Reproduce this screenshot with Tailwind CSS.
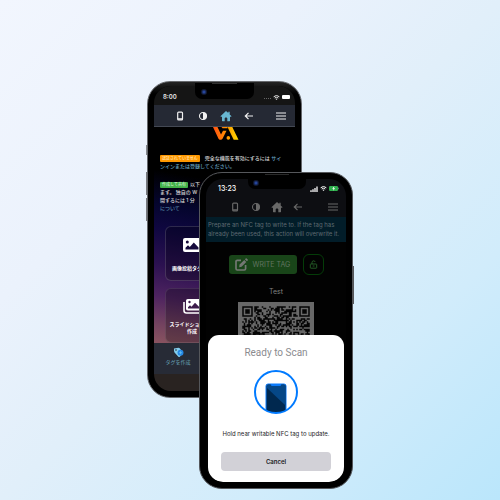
<!DOCTYPE html>
<html lang="ja">
<head>
<meta charset="utf-8">
<meta name="viewport" content="width=device-width, initial-scale=1">
<title>NFC Tag Writer</title>
<script src="https://cdn.jsdelivr.net/npm/@tailwindcss/browser@4"></script>
</head>
<body class="font-['Inter','Noto_Sans_CJK_JP',sans-serif]">
<svg class="hidden" aria-hidden="true">
  <symbol id="i-phone" viewBox="0 0 10 10"><rect x="2.700" y="1.100" width="4.800" height="7.800" rx=".9" fill="none" stroke="currentColor" stroke-width="1.200"/><path d="M2.700 7.200h4.800v1.400H2.700z" fill="currentColor"/></symbol>
  <symbol id="i-contrast" viewBox="0 0 10 10"><circle cx="5" cy="5" r="3.500" fill="none" stroke="currentColor" stroke-width="1.100"/><path d="M5 1.500a3.500 3.500 0 0 1 0 7z" fill="currentColor"/></symbol>
  <symbol id="i-home" viewBox="0 0 12 12"><path d="M6 .9.7 5.900c-.3.4 0 .8.4.8h.9v4c0 .3.200.5.500.5h2.200V8.400c0-.6.500-1 1.300-1s1.300.4 1.300 1v2.800h2.200c.3 0 .5-.2.500-.5v-4h.9c.4 0 .7-.4.400-.8L9.700 4.400V1.800H8.300v1.300z" fill="currentColor"/></symbol>
  <symbol id="i-back" viewBox="0 0 10 10"><path d="M9 5H1.300M4.500 1.800 1.300 5l3.200 3.200" fill="none" stroke="currentColor" stroke-width="1.200"/></symbol>
  <symbol id="i-menu" viewBox="0 0 10 10"><path d="M0 2h10M0 5h10M0 8h10" stroke="currentColor" stroke-width="1"/></symbol>
  <symbol id="i-wifi" viewBox="0 0 8 6"><path d="M.6 2.100a5 5 0 0 1 6.800 0M1.900 3.600a3.200 3.200 0 0 1 4.200 0" fill="none" stroke="currentColor" stroke-width="1.200"/><path d="M4 5.900 2.900 4.700a1.600 1.600 0 0 1 2.200 0z" fill="currentColor"/></symbol>
</svg>

<main class="relative min-h-screen overflow-hidden bg-[linear-gradient(135deg,#f2f6fe_0%,#ebf2fc_30%,#e1effa_50%,#d1ecfb_75%,#bae6fb_100%)]">

  <!-- Tag creation screen -->
  <section class="absolute left-[147px] top-[81px]" aria-label="タグを作成">
    <span class="absolute -left-px top-[64px] h-[10px] w-[2px] bg-[#85888d]"></span>
    <span class="absolute -left-px top-[91px] h-[23px] w-[2px] bg-[#77797e]"></span>
    <span class="absolute -left-px top-[117px] h-[23px] w-[2px] bg-[#77797e]"></span>
    <div class="relative w-[155px] rounded-[23px] border border-[#66686c] bg-[linear-gradient(#242424,#000_12px)] px-[6px] pt-[4px] pb-[6px]">
      <span class="absolute left-[47px] top-[1px] z-10 flex h-[16px] w-[59px] rounded-b-[7px] bg-black">
        <span class="absolute left-[17px] top-0 h-px w-[25px] bg-[#303030]"></span>
        <span class="absolute left-[6px] top-[6px] size-[6px] rounded-full bg-[radial-gradient(#2747a0_15%,#10182f_60%)]"></span>
      </span>
      <div class="overflow-hidden rounded-[17px] bg-black">
        <div class="flex h-[19px] items-center justify-between bg-[#151515] pl-[9px] pr-[5px] pt-[3px] text-[#e8e8e8]">
          <time class="text-[6px] leading-[8px] font-semibold">8:00</time>
          <div class="flex items-center gap-[2px]">
            <span class="w-[7px] border-b border-dotted border-[#666] pt-[3px]"></span>
            <svg class="h-[5px] w-[7px]"><use href="#i-wifi"/></svg>
            <span class="h-[4px] w-[8px] rounded-[1px] bg-white"></span>
          </div>
        </div>
        <nav class="flex h-[22px] items-center border-b border-[#444954] bg-[#252934] pl-[21px] pr-[9px] text-[#f1f1f1]">
          <div class="flex items-center gap-[13px]">
            <button aria-label="デバイス"><svg class="block size-[10px]"><use href="#i-phone"/></svg></button>
            <button aria-label="テーマ"><svg class="block size-[10px]"><use href="#i-contrast"/></svg></button>
            <a href="#" aria-label="ホーム" class="-mx-px text-[#69b7d2]"><svg class="block size-[12px]"><use href="#i-home"/></svg></a>
            <button aria-label="戻る"><svg class="block size-[10px]"><use href="#i-back"/></svg></button>
          </div>
          <button aria-label="メニュー" class="ml-auto"><svg class="block size-[10px]"><use href="#i-menu"/></svg></button>
        </nav>
        <div class="h-[216px] overflow-hidden bg-[linear-gradient(190deg,#000_0%,#000_28%,#05052e_42%,#0f0740_52%,#2b1150_67%,#4d2360_80%,#74435f_92%,#8a5460_100%)]">
          <svg class="ml-[59px] block h-[13px] w-[26px]" viewBox="0 0 26 13" role="img" aria-label="VA">
            <defs><linearGradient id="mark" x1="0" x2="26" y1="0" y2="0" gradientUnits="userSpaceOnUse"><stop stop-color="#ff4e13"/><stop offset=".5" stop-color="#ff9200"/><stop offset="1" stop-color="#ffe000"/></linearGradient></defs>
            <g fill="url(#mark)"><path d="M0 0H4.500L8 7.500 10 3.800H13.500L9.500 11.700Q8.900 12.800 7.800 12.800H7Q6 12.800 5.500 11.700Z"/><path d="M8.500 0H14.500V1.300H9.500z"/><circle cx="15.300" cy="10.900" r="1.800"/><path d="M14.500 0h4.800L25.500 12.800h-4.800z"/></g>
          </svg>
          <div class="pl-[6px] pt-[14px] text-[5px] leading-[8px] font-medium whitespace-nowrap text-[#d8d8d8]">
            <p><span class="mr-[5px] inline-block rounded-[1px] bg-[#ff9800] px-[2px] text-[4px] leading-[7px] text-[#ffe0ad]">認証されていません</span>完全な機能を有効にするには <a href="#" class="text-[#69a5c0]">サイ<br>ンインまたは登録してください。</a></p>
            <p class="mt-[10px]"><span class="mr-[2px] inline-block rounded-[1px] bg-[#43af49] px-[2px] text-[4px] leading-[6px] text-[#c9f0cb]">作成して共有</span>以下<br>ます。 独自の W<br>開するには 1 分<br><a href="#" class="text-[#5789a8]">について</a></p>
          </div>
          <div class="grid grid-cols-[54px_54px] gap-[7px] pl-[11px] pt-[14px] text-center text-[5px] leading-[7px] font-bold whitespace-nowrap text-white">
            <a href="#" class="flex h-[55px] flex-col items-center rounded-[6px] border border-white/15 bg-black/25 pt-[11px]">
              <svg class="h-[14px] w-[18px]" viewBox="0 0 18 14"><rect width="18" height="14" rx="2" fill="#fff"/><circle cx="4.300" cy="4" r="1.500" fill="#160a3c"/><path d="M2.500 11.500V9.800L5 7.300l1.800 1.800 4-4.600 4.700 5v2z" fill="#160a3c"/></svg>
              <span class="mt-[13px]">画像投稿タグ作成</span>
            </a>
            <span></span>
            <a href="#" class="flex h-[55px] flex-col items-center rounded-[6px] border border-white/10 bg-black/25 pt-[10px]">
              <svg class="h-[15px] w-[18px]" viewBox="0 0 18 15"><path d="M1 3v8.500Q1 14 3.500 14H16" fill="none" stroke="#fff" stroke-width="1.600"/><rect x="3" y="0" width="15" height="11.500" rx="1.800" fill="#fff"/><circle cx="6.500" cy="3" r="1.200" fill="#3d1c4c"/><path d="M5 9.500V8.300l2-2 1.500 1.500 3.500-4 4 4v1.700z" fill="#3d1c4c"/></svg>
              <span class="mt-[7px]">スライドショータグ<br>作成</span>
            </a>
          </div>
        </div>
        <div class="flex h-[31px] bg-[#272b36] pl-[11px] text-[5px] leading-[8px] text-[#69a5b9]">
          <a href="#" class="flex w-[26px] flex-col items-center pt-[4px] whitespace-nowrap">
            <svg class="block h-[11px] w-[11px]" viewBox="0 0 11 11"><path d="M1 1.500 5.500.8q.7 0 1.200.5L9.700 5q.6.700 0 1.400L6.800 9.700q-.7.600-1.400 0L1.500 5.500Q.8 4.500 1 1.500z" fill="#82cdec"/><circle cx="3" cy="3" r=".8" fill="#272b36"/><circle cx="7.500" cy="5.700" r="3" fill="#2589e5"/><path d="M7.500 4.200v3M6 5.700h3" stroke="#65bdf0" stroke-width=".8"/></svg>
            タグを作成
          </a>
        </div>
        <div class="h-[17px] bg-[#292321]"></div>
      </div>
    </div>
  </section>

  <!-- NFC writing screen -->
  <section class="absolute left-[199px] top-[172px]" aria-label="NFC tag" lang="en">
    <span class="absolute -right-px top-[94px] h-[38px] w-[2px] bg-[#55565a]"></span>
    <div class="relative w-[154px] rounded-[23px] border border-[#55575b] bg-black p-[6px]">
      <span class="absolute left-[48px] top-[1px] z-10 h-[15px] w-[58px] rounded-b-[7px] bg-black">
        <span class="absolute left-[17px] top-0 h-px w-[24px] bg-[#2a2a2a]"></span>
        <span class="absolute left-[5px] top-[6px] size-[6px] rounded-full bg-[radial-gradient(#2747a0_15%,#10182f_60%)]"></span>
      </span>
      <div class="relative h-[303px] overflow-hidden rounded-[17px] bg-[#020202]">
        <div class="flex h-[17px] items-center justify-between bg-[#0d0e12] pl-[12px] pr-[7px] pt-[2px] text-white">
          <time class="text-[7px] leading-[8px] font-medium">13:23</time>
          <div class="flex items-center gap-[2px]">
            <svg class="h-[6px] w-[8px]" viewBox="0 0 8 6"><path d="M1 6V4.300M3 6V3.300M5 6V2M7 6V.6" stroke="#fff" stroke-width="1.300"/></svg>
            <svg class="h-[5px] w-[7px]"><use href="#i-wifi"/></svg>
            <svg class="h-[5px] w-[10px]" viewBox="0 0 10 5"><rect width="9" height="5" rx="1.300" fill="#30b04e"/><path d="M9.500 1.700v1.600" stroke="#789" stroke-width=".7"/><path d="M5.300.3 3.200 2.800h1.300L4 4.800l2.200-2.600H4.900z" fill="#fff"/></svg>
          </div>
        </div>
        <nav class="flex h-[21px] items-center bg-[#0d0e12] pl-[24px] pr-[8px] text-[#686868]">
          <div class="flex items-center gap-[11px]">
            <button aria-label="Device"><svg class="block size-[10px]"><use href="#i-phone"/></svg></button>
            <button aria-label="Theme"><svg class="block size-[10px]"><use href="#i-contrast"/></svg></button>
            <a href="#" aria-label="Home" class="-mx-px"><svg class="block size-[12px]"><use href="#i-home"/></svg></a>
            <button aria-label="Back"><svg class="block size-[10px]"><use href="#i-back"/></svg></button>
          </div>
          <button aria-label="Menu" class="ml-auto"><svg class="block size-[10px]"><use href="#i-menu"/></svg></button>
        </nav>
        <p class="h-[25px] bg-[#021d29] pl-[2px] pt-[3px] text-[6px] leading-[9px] whitespace-nowrap text-[#5f6a71]">Prepare an NFC tag to write to. If the tag has<br>already been used, this action will overwrite it.</p>
        <div class="flex items-center justify-center gap-[6px] pt-[12px]">
          <button class="flex h-[19px] w-[68px] items-center gap-[5px] rounded-[3px] bg-[#194519] pl-[6px] text-[7px] leading-[9px] whitespace-nowrap text-[#617461]">
            <svg class="size-[13px] shrink-0" viewBox="0 0 13 13"><path d="M6 2.300H2.300Q1 2.300 1 3.600v7Q1 12 2.300 12h7q1.300 0 1.300-1.300V7" fill="none" stroke="#737773" stroke-width="1.700"/><path d="M4.200 9.200 4.500 6.600 9.300 1.900l2 2L6.600 8.700zM9.900 1.300l.8-.8q.5-.4 1 0l1 1q.4.500 0 1l-.8.800z" fill="#737773"/></svg>
            WRITE TAG
          </button>
          <button aria-label="Unlock" class="flex size-[21px] items-center justify-center rounded-[6px] border border-[#043c08]">
            <svg class="size-[9px]" viewBox="0 0 9 9" fill="none" stroke="#28652a" stroke-width=".9"><rect x="1.300" y="4" width="6.400" height="4.200" rx=".5"/><path d="M3 4V2.300a1.600 1.600 0 0 1 3.100-.4M3.700 6h1.800"/></svg>
          </button>
        </div>
        <h2 class="pt-[12px] text-center text-[7px] leading-[9px] text-[#808080]">Test</h2>
        <svg id="qr" class="mx-auto mt-[6px] block size-[76px] bg-[#686868]" viewBox="0 0 76 76" role="img" aria-label="QR"></svg>

        <div role="dialog" aria-labelledby="scan" class="absolute inset-x-[2px] bottom-0 flex flex-col items-center rounded-t-[11px] rounded-b-[15px] bg-white px-[13px] pt-[11px] pb-[11px]">
          <h1 id="scan" class="font-['Roboto','Inter',sans-serif] text-[10px] leading-[13px] text-[#8b8b8f]">Ready to Scan</h1>
          <svg class="mt-[11px] block size-[44px]" viewBox="0 0 44 44">
            <defs><clipPath id="ring"><circle cx="22" cy="22" r="21"/></clipPath></defs>
            <g clip-path="url(#ring)"><rect x="12" y="14" width="20" height="34" rx="2" fill="#00284f" stroke="#0b7bfb" stroke-width="1"/><path d="M13 15h18.500v20.500L13 18z" fill="#054787"/><path d="M16.500 14h11l-1 2h-9z" fill="#0b7bfb"/></g>
            <circle cx="22" cy="22" r="21" fill="none" stroke="#007aff" stroke-width="2"/>
          </svg>
          <p class="mt-[15px] text-[6px] leading-[9px] whitespace-nowrap text-[#1c1c1e]">Hold near writable NFC tag to update.</p>
          <button class="mt-[14px] h-[19px] w-full rounded-[4px] bg-[#d2d1d7] text-[6px] leading-[9px] font-semibold text-[#18181a]">Cancel</button>
        </div>
      </div>
    </div>
  </section>
</main>
<script>
  // Fills the code with 45 x 45 modules and three finder squares.
  const n = 45, m = 1.5, o = 4.25;
  let seed = 71, d = '';
  const rnd = () => (seed = (seed * 16807) % 2147483647) / 2147483647;
  const finder = (x, y) => {
    for (const [cx, cy] of [[3, 3], [n - 4, 3], [3, n - 4]]) {
      const r = Math.max(Math.abs(x - cx), Math.abs(y - cy));
      if (r <= 4) return r !== 4 && r !== 2;
    }
    return null;
  };
  for (let y = 0; y < n; y++) for (let x = 0; x < n; x++) {
    const v = rnd() < 0.54, f = finder(x, y);
    if (f === null ? v : f) d += `M${o + x * m} ${o + y * m}h${m}v${m}h-${m}z`;
  }
  document.getElementById('qr').innerHTML = `<path fill="#050505" d="${d}"/>`;
</script>
</body>
</html>
